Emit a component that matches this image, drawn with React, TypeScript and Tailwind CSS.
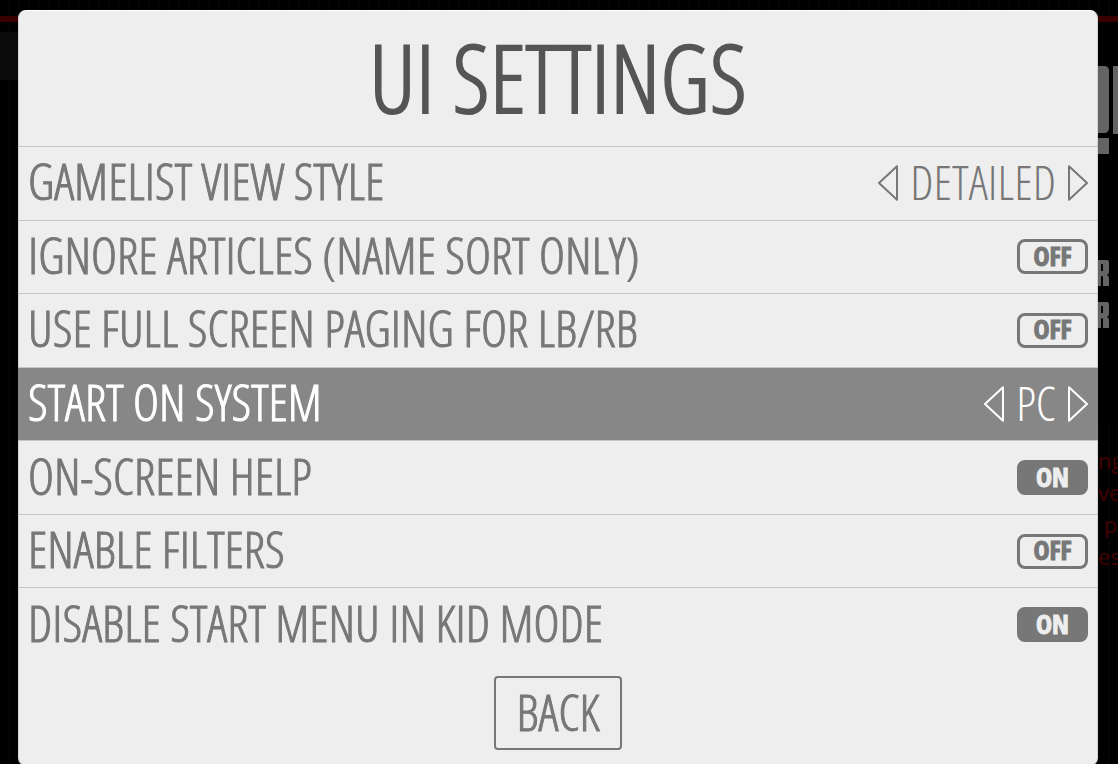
import { useState, type ReactNode } from "react";

function Triangle({ flip = false }: { flip?: boolean }) {
  return (
    <svg width="20" height="36" viewBox="0 0 20 36" fill="none" stroke="currentColor" strokeWidth="2" strokeLinejoin="round" aria-hidden="true">
      <path d={flip ? "M1 1.2 L19 18 L1 34.8 Z" : "M19 1.2 L1 18 L19 34.8 Z"} />
    </svg>
  );
}

function Row({ label, selected = false, children }: { label: ReactNode; selected?: boolean; children: ReactNode }) {
  return (
    <li
      className={
        selected
          ? "-mx-px flex min-h-[73px] flex-1 items-center justify-between border-t border-[#c6c6c6] bg-[#878787] px-2.5 text-white"
          : "-mx-px flex min-h-[73px] flex-1 items-center justify-between border-t border-[#c6c6c6] px-2.5 text-[#777777]"
      }
    >
      {label}
      {children}
    </li>
  );
}

const labelText = "pb-1 text-[50px] leading-[60px] whitespace-nowrap [-webkit-text-stroke:1px_currentColor]";

function OptionRow({ label, options, selected }: { label: string; options: string[]; selected?: boolean }) {
  const [index, setIndex] = useState(0);
  const step = (by: number) => setIndex((index + by + options.length) % options.length);
  return (
    <Row selected={selected} label={<span className={labelText}>{label}</span>}>
      <div className="flex items-center gap-3">
        <button type="button" aria-label={`Previous ${label}`} onClick={() => step(-1)}>
          <Triangle />
        </button>
        <output className="pb-0.5 text-[48px] leading-[60px]">{options[index]}</output>
        <button type="button" aria-label={`Next ${label}`} onClick={() => step(1)}>
          <Triangle flip />
        </button>
      </div>
    </Row>
  );
}

function ToggleRow({ id, label, initial = false }: { id: string; label: string; initial?: boolean }) {
  const [on, setOn] = useState(initial);
  return (
    <Row label={<label htmlFor={id} className={labelText}>{label}</label>}>
      <label
        className={
          on
            ? "relative flex h-[35px] w-[71px] items-center justify-center rounded-lg border-[3px] border-[#777777] bg-[#777777] pb-0.5 font-['Open_Sans_Condensed','Open_Sans',sans-serif] text-[27px] leading-7 font-bold text-[#eeeeee] [-webkit-text-stroke:1px_currentColor]"
            : "relative flex h-[35px] w-[71px] items-center justify-center rounded-lg border-[3px] border-[#777777] pb-0.5 font-['Open_Sans_Condensed','Open_Sans',sans-serif] text-[27px] leading-7 font-bold text-[#777777] [-webkit-text-stroke:1px_currentColor]"
        }
      >
        <input id={id} type="checkbox" className="sr-only" checked={on} onChange={(e) => setOn(e.target.checked)} />
        {on ? "ON" : "OFF"}
      </label>
    </Row>
  );
}

function Backdrop() {
  return (
    <div aria-hidden="true" className="absolute inset-0 overflow-hidden bg-[repeating-linear-gradient(90deg,#000000_0px,#000000_7px,#040404_8px,#040404_10px)]">
      <div className="absolute top-4 h-1.5 w-full bg-[#380000]" />
      <div className="absolute top-8 left-0 h-12 w-10 bg-[#0b0b0b]" />
      <div className="absolute top-[24px] right-0 h-[400px] w-[30px] bg-black" />
      <svg className="absolute top-0 right-0" width="30" height="340" viewBox="0 0 30 340" fill="#646464">
        <path d="M0 66h16q5 0 5 5v57q0 5-5 5H0Z M25 66h5v68h-5Z M0 138h21v16H0Z" />
        <path fillRule="evenodd" d="M5 260h14q2 0 2 3v9q0 2-2 3 2 1 2 3v8h-6v-9q0-1-2-1v10H5Z M13 264h2v7h-2Z" />
        <path fillRule="evenodd" d="M5 302h14q2 0 2 3v9q0 2-2 3 2 1 2 3v8h-6v-9q0-1-2-1v10H5Z M13 306h2v7h-2Z" />
      </svg>
      <div className="absolute top-[444px] right-0 w-5 font-['Open_Sans',sans-serif] text-[22px] leading-8 whitespace-pre text-[#440000]">
        <p>ng</p>
        <p>ve</p>
        <p> p</p>
        <p>es</p>
      </div>
    </div>
  );
}

export default function App() {
  return (
    <main className="relative flex h-screen flex-col overflow-hidden bg-black pt-2.5 pr-5 pl-[18px] font-['Open_Sans_Condensed_Light','Open_Sans_Condensed','Open_Sans',sans-serif] [font-kerning:none]">
      <Backdrop />
      <section className="relative z-10 -mb-0.5 flex flex-1 flex-col rounded-lg border border-x-[#d4d4d4] border-t-white border-b-[#c6c6c6] bg-[#eeeeee]">
        <h1 className="flex h-[135px] items-center justify-center pb-1 text-[94px] leading-none text-[#555555] [-webkit-text-stroke:2px_currentColor]">
          UI SETTINGS
        </h1>
        <ul className="flex flex-1 flex-col">
          <OptionRow label="GAMELIST VIEW STYLE" options={["DETAILED", "BASIC", "VIDEO", "GRID"]} />
          <ToggleRow id="articles" label="IGNORE ARTICLES (NAME SORT ONLY)" />
          <ToggleRow id="paging" label="USE FULL SCREEN PAGING FOR LB/RB" />
          <OptionRow label="START ON SYSTEM" options={["PC", "NONE"]} selected />
          <ToggleRow id="help" label="ON-SCREEN HELP" initial />
          <ToggleRow id="filters" label="ENABLE FILTERS" />
          <ToggleRow id="kid" label="DISABLE START MENU IN KID MODE" initial />
        </ul>
        <footer className="flex justify-center py-[15px]">
          <button type="button" className="h-[74px] rounded border-2 border-[#777777] px-5 pb-0.5 text-[50px] leading-[60px] text-[#777777] [-webkit-text-stroke:1px_currentColor]">
            BACK
          </button>
        </footer>
      </section>
    </main>
  );
}
